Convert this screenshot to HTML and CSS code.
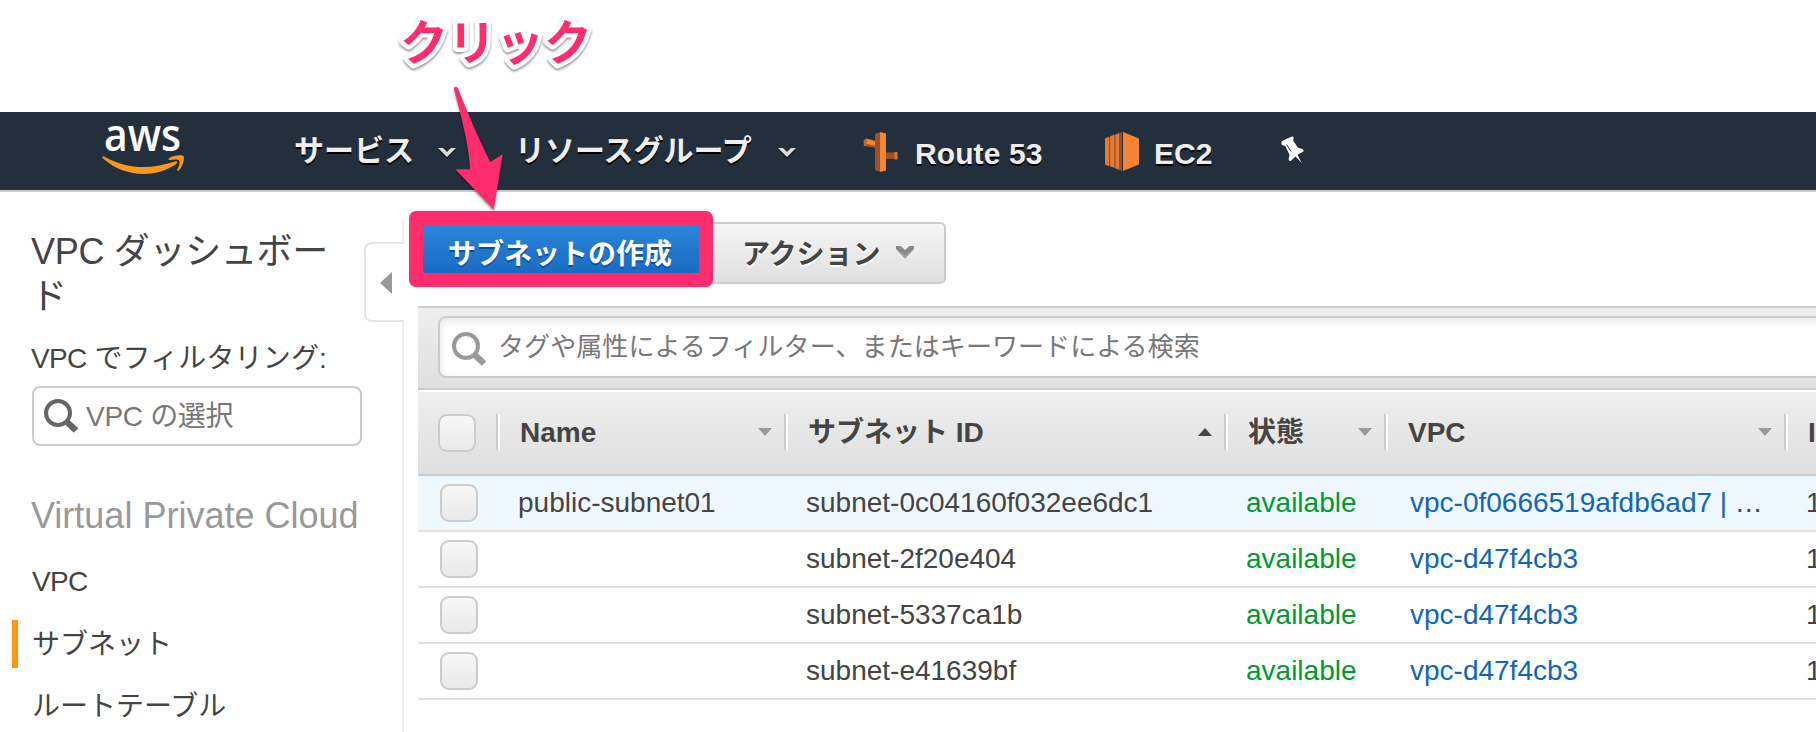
FILE: index.html
```html
<!DOCTYPE html>
<html lang="ja">
<head>
<meta charset="utf-8">
<title>VPC サブネット</title>
<link rel="stylesheet" href="styles.css">
</head>
<body>
<div class="topspace"></div>
<header class="nav">
  <svg class="logo" width="84" height="54" viewBox="0 0 84 54">
    <text class="logo-text" x="2" y="27" textLength="77" lengthAdjust="spacingAndGlyphs">aws</text>
    <path fill="#f8991d" d="M0.5 34 C0 32 1.3 31.700 3 32.900 C26 45.500 49 45.500 73 37.500 C75 36.800 76.300 38.400 74.500 39.800 C55 54 23 54.500 0.500 34Z"/>
    <path fill="#f8991d" d="M67 34.300 C71 30.900 80 30.700 81.500 32 C83 34.300 80.500 43 77 46.300 C76 47.100 74.800 46.700 75.300 45.500 C77.500 41.500 78 37.500 77.200 36.400 C76 35.200 71.500 35.500 68 36 C66.500 36.100 66 35.200 67 34.300Z"/>
  </svg>
  <div class="nav-item services">サービス
    <svg class="chev" width="18" height="12" viewBox="0 0 18 12"><path class="chev-dark" d="M0 2.500H5L9 6.500L13 2.500H18L9 11.500Z"/><path class="chev-light" d="M0 1H5L9 5L13 1H18L9 10Z"/></svg>
  </div>
  <div class="nav-item groups">リソースグループ
    <svg class="chev" width="18" height="12" viewBox="0 0 18 12"><path class="chev-dark" d="M0 2.500H5L9 6.500L13 2.500H18L9 11.500Z"/><path class="chev-light" d="M0 1H5L9 5L13 1H18L9 10Z"/></svg>
  </div>
  <div class="nav-link route">
    <svg width="36" height="40" viewBox="0 0 36 40">
      <path fill="#9d5025" d="M21 20.500h11.500v6.500H21z"/><path fill="#d87530" d="M31.500 20h3v7.500h-3z"/>
      <path fill="#f58536" d="M3.500 6.500L14 9.500v6L1.500 13z"/><path fill="#9d5025" d="M1.500 11.500L13 14v2L0.500 14z"/><path fill="#c66a2b" d="M0.500 9l2-2.500 2 .5-1.500 7-2-.500z"/>
      <path fill="#9d5025" d="M12 2l5-2v40l-5-2z"/><path fill="#f58536" d="M17 0l6 1.500v37L17 40z"/>
    </svg>
    <span>Route 53</span>
  </div>
  <div class="nav-link ec2">
    <svg width="34" height="39" viewBox="0 0 34 39">
      <path fill="#9d5025" d="M0 7L17 0v39L0 32z"/><path fill="#f58536" d="M18 0l16 6.500v26L18 39z"/>
      <path fill="#e47b32" d="M0 6.500l4-1.700v29.400L0 32.500zM5.200 4.300l4-1.700v33l-4-1.200zM10.500 2.500l3.500-1.500v36.500l-3.500-1.200z"/>
    </svg>
    <span>EC2</span>
  </div>
  <svg class="pin" width="24" height="28" viewBox="0 0 24 28">
    <path fill="#fff" d="M2 4.500L11 .5c1.500 0 2.300 1.500 1.200 2.600l.3 1.900 4.500 6.700 3.500 1c2 .5 2.800 2.300 1.500 3.100l-5.500 3 4.200 8.200-6.200-6.500-4.500 4.200c-1.500.8-2.500-.2-2.300-1.500l.8-4.400L4.300 10l-2.500-.8C0 8.500-.2 6 2 4.500z"/>
    <path stroke="#242f3e" stroke-width="1" fill="none" d="M5.500 8.500l4.500 7"/>
  </svg>
</header>

<main class="page">
  <aside class="sidebar">
    <h1 class="dash">VPC ダッシュボード</h1>
    <div class="filter-label"><span class="tight">VPC</span> でフィルタリング:</div>
    <div class="vpc-select">
      <svg width="36" height="36" viewBox="0 0 36 36"><circle cx="14" cy="14" r="12" fill="none" stroke="#666" stroke-width="4"/><path d="M23.500 23.500L32 31.500" stroke="#666" stroke-width="6.500"/></svg>
      <span>VPC の選択</span>
    </div>
    <h2 class="group">Virtual Private Cloud</h2>
    <ul class="menu">
      <li class="tight">VPC</li>
      <li class="current">サブネット</li>
      <li>ルートテーブル</li>
    </ul>
    <div class="toggle"><svg width="12" height="22" viewBox="0 0 12 22"><path fill="#999" d="M12 0v22L0 11z"/></svg></div>
  </aside>

  <section class="content">
    <div class="actions">
      <div class="btn primary">サブネットの作成</div>
      <div class="btn plain">アクション
        <svg width="18" height="13" viewBox="0 0 18 13"><path fill="#888" d="M0 0H4.500L9 4L13.500 0H18V3L9 12.500L0 3Z"/><path fill="#aaa" d="M3 4.500L9 9.500L15 4.500L9 11.500Z"/></svg>
      </div>
    </div>
    <div class="searchbar">
      <div class="search">
        <svg width="36" height="36" viewBox="0 0 36 36"><circle cx="14" cy="14" r="12" fill="none" stroke="#999" stroke-width="4"/><path d="M23.500 23.500L32 31.500" stroke="#999" stroke-width="6.500"/></svg>
        <span>タグや属性によるフィルター、またはキーワードによる検索</span>
      </div>
    </div>
    <div class="grid head">
      <div class="cell check"><i class="box"></i></div>
      <div class="cell">Name<i class="sort"></i></div>
      <div class="cell">サブネット ID<i class="sort up"></i></div>
      <div class="cell">状態<i class="sort"></i></div>
      <div class="cell">VPC<i class="sort"></i></div>
      <div class="cell">I</div>
    </div>
    <div class="grid row selected">
      <div class="check"><i class="box"></i></div><div>public-subnet01</div><div>subnet-0c04160f032ee6dc1</div><div class="ok">available</div><div class="vpc"><a>vpc-0f0666519afdb6ad7 |</a> …</div><div>1</div>
    </div>
    <div class="grid row">
      <div class="check"><i class="box"></i></div><div></div><div>subnet-2f20e404</div><div class="ok">available</div><div class="vpc"><a>vpc-d47f4cb3</a></div><div>1</div>
    </div>
    <div class="grid row">
      <div class="check"><i class="box"></i></div><div></div><div>subnet-5337ca1b</div><div class="ok">available</div><div class="vpc"><a>vpc-d47f4cb3</a></div><div>1</div>
    </div>
    <div class="grid row">
      <div class="check"><i class="box"></i></div><div></div><div>subnet-e41639bf</div><div class="ok">available</div><div class="vpc"><a>vpc-d47f4cb3</a></div><div>1</div>
    </div>
  </section>
</main>

<div class="callout-box"></div>
<svg class="callout" width="220" height="220" viewBox="0 0 220 220">
  <text class="callout-text" x="20" y="60">クリック</text>
  <path class="callout-arrow" d="M74 89C73.500 86.500 77 86 78 88.500C87 111 98 138 110.300 162L122.700 154.300L113.700 209.700L75.300 169.300H90C89 145 81 116 74 89Z"/>
</svg>
</body>
</html>
```
FILE: styles.css
```css
* { box-sizing: border-box; }
body {
  margin: 0;
  width: 1816px;
  height: 732px;
  overflow: hidden;
  position: relative;
  background: #fff;
  color: #444;
  font: 28px/56px "Liberation Sans", "Noto Sans CJK JP", sans-serif;
}
svg { display: block; flex: none; }
.topspace { height: 112px; }

.nav {
  height: 80px;
  display: flex;
  background: #242f3e;
  border-bottom: 2px solid #c9cacd;
  color: #eee;
  font-weight: bold;
  text-shadow: 0 2px 0 #000;
  white-space: nowrap;
}
.logo { margin: 12px 0 0 102px; overflow: visible; }
.logo-text { font: 600 46px "Open Sans", sans-serif; fill: #fff; text-shadow: none; }
.nav-item { display: flex; align-items: flex-start; height: 78px; font-size: 30px; line-height: 78px; }
.services { margin-left: 108px; width: 221px; gap: 24px; }
.groups { width: 281px; gap: 26px; }
.chev { margin-top: 35px; }
.chev-light { fill: #ddd; }
.chev-dark { fill: #0009; }
.nav-link { display: flex; line-height: 84px; font-size: 30px; }
.route { margin-left: 67px; }
.route svg { margin-top: 20px; }
.route span { margin-left: 16px; width: 190px; letter-spacing: 0.1px; }
.ec2 svg { margin-top: 20px; }
.ec2 span { margin-left: 15px; width: 60px; }
.pin { margin: 24px 0 0 67px; }

.page { display: flex; height: 540px; }
.sidebar { width: 404px; position: relative; flex: none; padding: 37px 0 0 31px; }
.sidebar::after {
  content: "";
  position: absolute;
  right: 0;
  top: 30px;
  bottom: 0;
  width: 2px;
  background: #eee;
}
.dash { margin: 0; font: 36px/45px "Liberation Sans", "Noto Sans CJK JP", sans-serif; letter-spacing: -0.3px; width: 302px; }
.filter-label { margin-top: 20px; line-height: 40px; letter-spacing: 0.15px; }
.vpc-select {
  width: 330px;
  height: 60px;
  margin: 7px 0 0 1px;
  border: 2px solid #ccc;
  border-radius: 8px;
  display: flex;
  color: #777;
}
.vpc-select svg { margin: 11px 0 0 10px; }
.vpc-select span { margin-left: 6px; line-height: 57px; letter-spacing: -0.3px; }
.group { margin: 48px 0 0; font: 36px/44px "Liberation Sans", sans-serif; color: #999; white-space: nowrap; }
.menu { list-style: none; margin: 20px 0 0 -19px; padding: 0; }
.menu li { height: 48px; line-height: 49px; margin-bottom: 14px; padding-left: 14px; border-left: 6px solid transparent; }
.menu .current { border-color: #ff9914; }
.menu .tight { line-height: 47px; }
.tight { letter-spacing: -0.7px; }
.toggle {
  position: absolute;
  z-index: 1;
  top: 50px;
  right: 0;
  width: 40px;
  height: 80px;
  border: 2px solid #e5e5e5;
  border-right: 0;
  border-radius: 8px 0 0 8px;
  background: #fff;
  padding: 28px 0 0 14px;
}

.content { flex: none; width: 1398px; margin-left: 14px; overflow: hidden; }
.actions { display: flex; height: 114px; padding-top: 30px; }
.btn { height: 62px; border-radius: 6px; font-weight: bold; white-space: nowrap; }
.primary { width: 288px; padding-right: 4px; text-align: center; color: #fff; background: linear-gradient(#2e86de, #1466ba); text-shadow: 0 2px 0 #0d4f96; line-height: 65px; }
.plain {
  width: 240px;
  display: flex;
  padding-left: 34px;
  border: 2px solid #ccc;
  background: linear-gradient(#f5f5f5, #e0e0e0);
  text-shadow: 0 2px 0 #fff;
  line-height: 61px;
}
.plain svg { margin: 22px 0 0 15px; }
.searchbar {
  height: 86px;
  padding: 8px 0 0 20px;
  border-top: 2px solid #ccc;
  border-bottom: 2px solid #fff;
  background: linear-gradient(#eee, #dfdfdf);
  box-shadow: inset 0 -2px 0 #ccc;
}
.search {
  height: 62px;
  width: 1400px;
  border: 2px solid #ccc;
  border-radius: 8px 0 0 8px;
  background: #fff;
  box-shadow: inset 0 3px 8px #0000001c;
  display: flex;
  color: #777;
  font-size: 26px;
  white-space: nowrap;
}
.search svg { margin: 14px 0 0 12px; }
.search span { margin-left: 10px; line-height: 59px; letter-spacing: 0.08px; }
.grid { display: grid; grid-template-columns: 80px 288px 440px 160px 400px 30px; white-space: nowrap; }
.head { height: 84px; border-bottom: 2px solid #ccc; background: linear-gradient(#eee, #dfdfdf); font-weight: bold; }
.cell { display: flex; justify-content: space-between; height: 37px; line-height: 37px; margin-top: 22px; padding: 0 14px 0 20px; border-left: 2px solid #fff; box-shadow: -2px 0 0 #ccc; }
.cell:last-child { padding-right: 0; }
.head .check { border: 0; box-shadow: none; padding: 0 0 0 20px; }
.box { display: block; width: 38px; height: 38px; flex: none; border: 2px solid #ccc; border-radius: 9px; background: linear-gradient(#f7f7f7, #e9e9e9); }
.sort { width: 14px; height: 8px; margin-top: 14px; background: #999; clip-path: polygon(0 0, 100% 0, 50% 100%); }
.up { background: #444; clip-path: polygon(50% 0, 100% 100%, 0 100%); }
.row { height: 56px; line-height: 54px; border-bottom: 2px solid #e0e0e0; }
.row > div { padding-left: 20px; }
.row .check { padding: 8px 0 0 22px; }
.row > .vpc { padding-left: 24px; }
.selected { background: #f0f8ff; }
.ok { color: #093; }
.row a { color: #1166bb; }

.callout-box { position: absolute; left: 409px; top: 211px; width: 304px; height: 76px; border: 14px solid #ff2d6d; border-radius: 7px; }
.callout { position: absolute; left: 380px; top: 0; filter: drop-shadow(0 2px 1px #0006); }
.callout-text { font: 700 48px "Noto Sans CJK JP", sans-serif; fill: #ff2d6d; stroke: #fff; stroke-width: 9px; stroke-linejoin: round; paint-order: stroke; }
.callout-arrow { fill: #ff2d6d; }
```
